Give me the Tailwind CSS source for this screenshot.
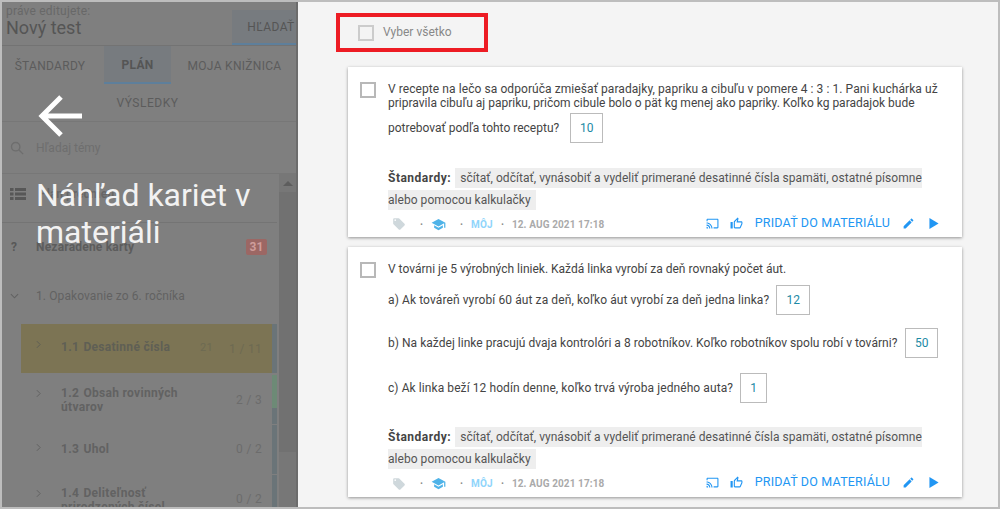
<!doctype html>
<html>
<head>
<meta charset="utf-8">
<script src="https://cdn.jsdelivr.net/npm/@tailwindcss/browser@4"></script>
</head>
<body class="bg-white">
<div class="w-[1000px] h-[509px] overflow-hidden border-2 border-[#bdbdbd] flex font-['Roboto',sans-serif] text-[12px]">
  <aside class="relative w-[296px] h-full shrink-0 overflow-hidden bg-[#7f7f7f] text-[#5c5c5c]">
    <div class="flex h-[44px] border-b border-[#737373]">
      <div class="flex-1 pl-1 mt-[1px]">
        <div class="text-[12px] leading-[16px] text-[#686868] tracking-[0.2px]">práve editujete:</div>
        <div class="text-[18px] leading-[22px] text-[#555555] -mt-[2px]">Nový test</div>
      </div>
      <div class="w-[66px] mt-2 border-b-2 border-[#5e7f9b] bg-[#777b7f] flex items-center justify-center pl-3 text-[12px] tracking-[0.4px] text-[#555555]">HĽADAŤ</div>
    </div>
    <div class="flex flex-wrap h-[76px] border-b border-[#777777] text-[12px] tracking-[0.3px]">
      <div class="h-[38px] w-[102px] flex items-center justify-center pr-[6px] pt-[1px]">ŠTANDARDY</div>
      <div class="h-[38px] w-[67px] flex items-center justify-center bg-[#777b7f] border-b-2 border-[#5e7f9b] font-bold text-[#555555] pt-[1px]">PLÁN</div>
      <div class="h-[38px] w-[127px] flex items-center justify-center pt-[1px]">MOJA KNIŽNICA</div>
      <div class="h-[38px] w-full flex items-center justify-center pr-[5px] tracking-[0.5px]">VÝSLEDKY</div>
    </div>
    <div class="flex items-center h-[52px] pl-2 gap-[12px] text-[#6e6e6e] border-b border-[#777777]">
      <svg viewBox="0 0 16 16" class="w-[14px] h-[14px] fill-none stroke-[#6e6e6e] stroke-[1.6]"><circle cx="6.5" cy="6.5" r="4.8"/><path d="M10 10l5 5"/></svg>
      <span>Hľadaj témy</span>
    </div>
    <div class="flex">
      <div class="w-[275px]">
        <div class="flex items-center h-[49px] pl-2 pb-[8px] gap-[13px] border-b border-[#747474] font-bold text-[#666666]">
          <svg viewBox="0 0 16 12" class="w-[16px] h-[12px] fill-[#575757]"><path d="M0 0h3.5v3H0zM5 0h11v3H5zM0 4.5h3.5v3H0zM5 4.5h11v3H5zM0 9h3.5v3H0zM5 9h11v3H5z"/></svg>
          <span>Plán predmetu</span>
        </div>
        <div class="flex items-center h-[48px] pl-[9px] pr-[10px] font-bold tracking-[0.2px]">
          <span class="w-[25px] text-[#585858]">?</span>
          <span class="flex-1">Nezaradené karty</span>
          <span class="w-[21px] h-[16px] rounded-[2px] bg-[#9c6764] text-[#cf9d9b] flex items-center justify-center">31</span>
        </div>
        <div class="flex items-center h-[53px] pb-[3px] pl-[8px]">
          <svg viewBox="0 0 10 6" class="w-[9px] h-[6px] fill-none stroke-[#626262] stroke-[1.2] mr-[17px]"><path d="M1 1l4 4 4-4"/></svg>
          <span class="text-[#626262] tracking-[0.1px]">1. Opakovanie zo 6. ročníka</span>
        </div>
        <div class="flex ml-[19px] h-[49px] mb-[2px] bg-[#7c7454]">
          <div class="flex-1 flex pl-[15px] pt-[14px] tracking-[0.3px]">
            <svg viewBox="0 0 6 10" class="w-[5px] h-[9px] mt-[2px] fill-none stroke-[#5f5f55] stroke-[1.2] mr-[20px]"><path d="M1 1l4 4-4 4"/></svg>
            <span class="font-bold text-[#5f5f55] flex-1"><span class="mr-[1px]">1.1</span> Desatinné čísla</span>
            <span class="text-[11px] text-[#6d6a52] mr-[16px] mt-[2px]">21</span>
            <span class="text-[#6d6a52] mr-[10px] mt-[2px] text-[12px]">1 / 11</span>
          </div>
          <div class="w-[5px] bg-[#6a7478]"></div>
        </div>
        <div class="flex ml-[19px] h-[49px] mb-[1px]">
          <div class="flex-1 flex pl-[15px] pt-[11px] tracking-[0.3px]">
            <svg viewBox="0 0 6 10" class="w-[5px] h-[9px] mt-[3px] fill-none stroke-[#626262] stroke-[1.2] mr-[20px]"><path d="M1 1l4 4-4 4"/></svg>
            <span class="font-bold flex-1 leading-[14px] text-[#626262]"><span class="mr-[1px]">1.2</span> Obsah rovinných<br>útvarov</span>
            <span class="text-[#6c6c6c] mr-[10px] mt-[5px]">2 / 3</span>
          </div>
          <div class="w-[5px] flex flex-col bg-[#6a7478]"><div class="h-[33px] bg-[#6d8a76]"></div></div>
        </div>
        <div class="flex ml-[19px] h-[49px] mb-[1px]">
          <div class="flex-1 flex pl-[15px] pt-[15px] tracking-[0.3px]">
            <svg viewBox="0 0 6 10" class="w-[5px] h-[9px] mt-[3px] fill-none stroke-[#626262] stroke-[1.2] mr-[20px]"><path d="M1 1l4 4-4 4"/></svg>
            <span class="font-bold flex-1 text-[#626262]"><span class="mr-[1px]">1.3</span> Uhol</span>
            <span class="text-[#6c6c6c] mr-[10px]">0 / 2</span>
          </div>
          <div class="w-[5px] bg-[#6a7478]"></div>
        </div>
        <div class="flex ml-[19px] h-[49px]">
          <div class="flex-1 flex pl-[15px] pt-[11px] tracking-[0.3px]">
            <svg viewBox="0 0 6 10" class="w-[5px] h-[9px] mt-[3px] fill-none stroke-[#626262] stroke-[1.2] mr-[20px]"><path d="M1 1l4 4-4 4"/></svg>
            <span class="font-bold flex-1 leading-[14px] text-[#626262]"><span class="mr-[1px]">1.4</span> Deliteľnosť<br>prirodzených čísel</span>
            <span class="text-[#6c6c6c] mr-[10px] mt-[4px]">0 / 2</span>
          </div>
          <div class="w-[5px] bg-[#6a7478]"></div>
        </div>
      </div>
      <div class="w-[17px] ml-[2px] bg-[#777777] flex flex-col items-center">
        <div class="pt-[7px] pb-[6px]"><div class="w-0 h-0 border-x-[5px] border-x-transparent border-b-[5px] border-b-[#5d5d5d]"></div></div>
        <div class="w-full h-[260px] bg-[#717171]"></div>
      </div>
    </div>
    <div class="absolute inset-y-0 right-0 w-[2px] bg-[#6c6c6c]"></div>
    <div class="absolute inset-0 pl-[34px] pt-[93px]">
      <svg viewBox="0 0 44 42" class="ml-[2px] w-[44px] h-[42px] fill-none stroke-white stroke-[5]"><path d="M44 21H5M23 2L4 21 23 40"/></svg>
      <div class="mt-[40px] text-[32px] leading-[37px] text-[#f2f2f2] w-[240px]">Náhľad kariet v materiáli</div>
    </div>
  </aside>
  <main class="flex-1 h-full overflow-hidden bg-[#f4f4f4] text-[#444444]">
    <div class="ml-[38px] mt-[11px] w-[152px] h-[39px] border-4 border-[#ed1c24] flex items-center pl-[18px] gap-[9px] text-[#888888]">
      <span class="w-[16px] h-[16px] border-2 border-[#cccccc]"></span>
      <span class="-mt-[2px]">Vyber všetko</span>
    </div>
    <article class="ml-[50px] mt-[15px] w-[614px] h-[170px] bg-white shadow-[0_1px_3px_rgba(0,0,0,0.4)] flex flex-col pl-[12px] pr-[20px]">
      <div class="flex flex-1 pt-[15px] gap-[12px]">
        <span class="w-[16px] h-[16px] shrink-0 border-2 border-[#b8b8b8]"></span>
        <div class="flex-1">
          <div class="leading-[14px]"><span class="tracking-[0.076px]">V recepte na lečo sa odporúča zmiešať paradajky, papriku a cibuľu v pomere 4 : 3 : 1. Pani kuchárka už</span><br>pripravila cibuľu aj papriku, pričom cibule bolo o pät kg menej ako papriky. Koľko kg paradajok bude</div>
          <div class="flex items-center mt-[3px] h-[30px]">potrebovať podľa tohto receptu?<span class="ml-[11px] w-[33px] h-[30px] border border-[#bbbbbb] text-[#1c8aa5] flex items-center justify-center">10</span></div>
          <div class="mt-[24px] leading-[22px]"><b class="mr-[1px] text-[#444444] tracking-[0.5px]">Štandardy:</b> <span class="bg-[#eeeeee] px-[5px] py-[3px] tracking-[0.04px] text-[#555555]">sčítať, odčítať, vynásobiť a vydeliť primerané desatinné čísla spamäti, ostatné písomne alebo pomocou kalkulačky</span></div>
        </div>
      </div>
      <div class="flex items-center h-[28px] pl-[32px] mr-[3px] text-[10px] font-bold">
        <svg viewBox="0 0 24 24" class="w-[14px] h-[14px] fill-[#cfd8dc] mr-[14px]"><path d="M21.410 11.580l-9-9C12.050 2.220 11.550 2 11 2H4c-1.100 0-2 .9-2 2v7c0 .55.22 1.050.59 1.420l9 9c.36.36.86.58 1.410.58.55 0 1.050-.22 1.410-.59l7-7c.37-.36.59-.86.59-1.410 0-.55-.23-1.060-.59-1.420zM5.500 7C4.670 7 4 6.330 4 5.500S4.670 4 5.500 4 7 4.670 7 5.500 6.330 7 5.500 7z"/></svg>
        <span class="text-[#888888] mr-[8px]">·</span>
        <svg viewBox="0 0 24 24" class="w-[15px] h-[15px] fill-[#4fb3e8] mr-[14px]"><path d="M5 13.180v4L12 21l7-3.820v-4L12 17l-7-3.820zM12 3L1 9l11 6 9-4.910V17h2V9L12 3z"/></svg>
        <span class="text-[#888888] mr-[8px]">·</span>
        <span class="text-[#90d5fb] tracking-[0.2px]">MÔJ</span>
        <span class="text-[#888888] mx-[8px]">·</span>
        <span class="text-[#aaaaaa] tracking-[0.1px]">12. AUG 2021 17:18</span>
        <span class="flex-1"></span>
        <svg viewBox="0 0 24 24" class="w-[13px] h-[13px] fill-[#2196f3] mr-[11px] -mt-[2px]"><path d="M21 3H3c-1.100 0-2 .9-2 2v3h2V5h18v14h-7v2h7c1.100 0 2-.9 2-2V5c0-1.100-.9-2-2-2zM1 18v3h3c0-1.660-1.340-3-3-3zm0-4v2c2.760 0 5 2.240 5 5h2c0-3.870-3.130-7-7-7zm0-4v2c4.970 0 9 4.030 9 9h2c0-6.080-4.930-11-11-11z"/></svg>
        <svg viewBox="0 0 24 24" class="w-[13px] h-[13px] fill-[#2196f3] mr-[12px] -mt-[2px]"><path d="M9 21h9c.83 0 1.540-.5 1.840-1.220l3.020-7.050c.09-.23.14-.47.14-.73v-2c0-1.100-.9-2-2-2h-6.310l.95-4.570.03-.32c0-.41-.17-.79-.44-1.060L14.170 1 7.580 7.590C7.220 7.950 7 8.450 7 9v10c0 1.100.9 2 2 2zM9 9l4.340-4.340L12 10h9v2l-3 7H9V9zM1 9h4v12H1z"/></svg>
        <span class="text-[12.5px] font-normal text-[#2196f3] mr-[12px] -mt-[2px] tracking-[0.2px]">PRIDAŤ DO MATERIÁLU</span>
        <svg viewBox="0 0 24 24" class="w-[13px] h-[13px] fill-[#2196f3] mr-[14px] -mt-[2px]"><path d="M3 17.250V21h3.750L17.810 9.940l-3.750-3.750L3 17.250zM20.710 7.040c.39-.39.39-1.020 0-1.410l-2.340-2.340c-.39-.39-1.020-.39-1.410 0l-1.830 1.830 3.750 3.750 1.830-1.830z"/></svg>
        <svg viewBox="0 0 10 12" class="w-[10px] h-[11px] fill-[#2196f3] -mt-[2px]"><path d="M0 0l10 6-10 6z"/></svg>
      </div>
    </article>
    <article class="ml-[50px] mt-[10px] w-[614px] h-[250px] bg-white shadow-[0_1px_3px_rgba(0,0,0,0.4)] flex flex-col pl-[12px] pr-[20px]">
      <div class="flex flex-1 pt-[15px] gap-[12px]">
        <span class="w-[16px] h-[16px] shrink-0 border-2 border-[#b8b8b8]"></span>
        <div class="flex-1">
          <div class="leading-[14px]">V továrni je 5 výrobných liniek. Každá linka vyrobí za deň rovnaký počet áut.</div>
          <div class="flex items-center mt-[9px] h-[30px]"><span class="tracking-[0.1px]">a) Ak továreň vyrobí 60 áut za deň, koľko áut vyrobí za deň jedna linka?</span><span class="ml-[7px] w-[34px] h-[30px] border border-[#bbbbbb] text-[#1c8aa5] flex items-center justify-center">12</span></div>
          <div class="flex items-center mt-[13px] h-[30px]"><span class="tracking-[0.03px]">b) Na každej linke pracujú dvaja kontrolóri a 8 robotníkov. Koľko robotníkov spolu robí v továrni?</span><span class="ml-[8px] w-[33px] h-[30px] border border-[#bbbbbb] text-[#1c8aa5] flex items-center justify-center">50</span></div>
          <div class="flex items-center mt-[15px] h-[30px]"><span class="tracking-[0.08px]">c) Ak linka beží 12 hodín denne, koľko trvá výroba jedného auta?</span><span class="ml-[7px] w-[27px] h-[30px] border border-[#bbbbbb] text-[#1c8aa5] flex items-center justify-center">1</span></div>
          <div class="mt-[23px] leading-[22px]"><b class="mr-[1px] text-[#444444] tracking-[0.5px]">Štandardy:</b> <span class="bg-[#eeeeee] px-[5px] py-[3px] tracking-[0.04px] text-[#555555]">sčítať, odčítať, vynásobiť a vydeliť primerané desatinné čísla spamäti, ostatné písomne alebo pomocou kalkulačky</span></div>
        </div>
      </div>
      <div class="flex items-center h-[28px] pl-[32px] mr-[3px] text-[10px] font-bold">
        <svg viewBox="0 0 24 24" class="w-[14px] h-[14px] fill-[#cfd8dc] mr-[14px]"><path d="M21.410 11.580l-9-9C12.050 2.220 11.550 2 11 2H4c-1.100 0-2 .9-2 2v7c0 .55.22 1.050.59 1.420l9 9c.36.36.86.58 1.410.58.55 0 1.050-.22 1.410-.59l7-7c.37-.36.59-.86.59-1.410 0-.55-.23-1.060-.59-1.420zM5.500 7C4.670 7 4 6.330 4 5.500S4.670 4 5.500 4 7 4.670 7 5.500 6.330 7 5.500 7z"/></svg>
        <span class="text-[#888888] mr-[8px]">·</span>
        <svg viewBox="0 0 24 24" class="w-[15px] h-[15px] fill-[#4fb3e8] mr-[14px]"><path d="M5 13.180v4L12 21l7-3.820v-4L12 17l-7-3.820zM12 3L1 9l11 6 9-4.910V17h2V9L12 3z"/></svg>
        <span class="text-[#888888] mr-[8px]">·</span>
        <span class="text-[#90d5fb] tracking-[0.2px]">MÔJ</span>
        <span class="text-[#888888] mx-[8px]">·</span>
        <span class="text-[#aaaaaa] tracking-[0.1px]">12. AUG 2021 17:18</span>
        <span class="flex-1"></span>
        <svg viewBox="0 0 24 24" class="w-[13px] h-[13px] fill-[#2196f3] mr-[11px] -mt-[2px]"><path d="M21 3H3c-1.100 0-2 .9-2 2v3h2V5h18v14h-7v2h7c1.100 0 2-.9 2-2V5c0-1.100-.9-2-2-2zM1 18v3h3c0-1.660-1.340-3-3-3zm0-4v2c2.760 0 5 2.240 5 5h2c0-3.870-3.130-7-7-7zm0-4v2c4.970 0 9 4.030 9 9h2c0-6.080-4.930-11-11-11z"/></svg>
        <svg viewBox="0 0 24 24" class="w-[13px] h-[13px] fill-[#2196f3] mr-[12px] -mt-[2px]"><path d="M9 21h9c.83 0 1.540-.5 1.840-1.220l3.020-7.050c.09-.23.14-.47.14-.73v-2c0-1.100-.9-2-2-2h-6.310l.95-4.570.03-.32c0-.41-.17-.79-.44-1.060L14.170 1 7.580 7.590C7.220 7.950 7 8.450 7 9v10c0 1.100.9 2 2 2zM9 9l4.340-4.340L12 10h9v2l-3 7H9V9zM1 9h4v12H1z"/></svg>
        <span class="text-[12.5px] font-normal text-[#2196f3] mr-[12px] -mt-[2px] tracking-[0.2px]">PRIDAŤ DO MATERIÁLU</span>
        <svg viewBox="0 0 24 24" class="w-[13px] h-[13px] fill-[#2196f3] mr-[14px] -mt-[2px]"><path d="M3 17.250V21h3.750L17.810 9.940l-3.750-3.750L3 17.250zM20.710 7.040c.39-.39.39-1.020 0-1.410l-2.340-2.340c-.39-.39-1.020-.39-1.410 0l-1.830 1.830 3.750 3.750 1.830-1.830z"/></svg>
        <svg viewBox="0 0 10 12" class="w-[10px] h-[11px] fill-[#2196f3] -mt-[2px]"><path d="M0 0l10 6-10 6z"/></svg>
      </div>
    </article>
  </main>
</div>
</body>
</html>
